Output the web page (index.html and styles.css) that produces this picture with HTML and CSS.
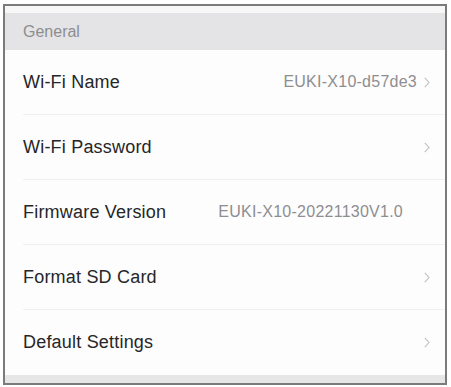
FILE: index.html
```html
<!DOCTYPE html>
<html>
<head>
<meta charset="utf-8">
<link rel="stylesheet" href="styles.css">
</head>
<body>
<div class="frame">
  <div class="top-strip"></div>
  <div class="section-header">General</div>
  <ul class="list">
    <li class="row">
      <div class="row-inner">
        <span class="label">Wi-Fi Name</span>
        <span class="value">EUKI-X10-d57de3</span>
        <svg class="chev" width="6" height="11" viewBox="0 0 6 11"><polyline points="0.8,0.8 5,5.5 0.8,10.2" fill="none" stroke="#bfbfc4" stroke-width="1.1"/></svg>
      </div>
    </li>
    <li class="row">
      <div class="row-inner">
        <span class="label">Wi-Fi Password</span>
        <svg class="chev" width="6" height="11" viewBox="0 0 6 11"><polyline points="0.8,0.8 5,5.5 0.8,10.2" fill="none" stroke="#bfbfc4" stroke-width="1.1"/></svg>
      </div>
    </li>
    <li class="row">
      <div class="row-inner">
        <span class="label">Firmware Version</span>
        <span class="value value-plain">EUKI-X10-20221130V1.0</span>
      </div>
    </li>
    <li class="row">
      <div class="row-inner">
        <span class="label">Format SD Card</span>
        <svg class="chev" width="6" height="11" viewBox="0 0 6 11"><polyline points="0.8,0.8 5,5.5 0.8,10.2" fill="none" stroke="#bfbfc4" stroke-width="1.1"/></svg>
      </div>
    </li>
    <li class="row">
      <div class="row-inner last">
        <span class="label">Default Settings</span>
        <svg class="chev" width="6" height="11" viewBox="0 0 6 11"><polyline points="0.8,0.8 5,5.5 0.8,10.2" fill="none" stroke="#bfbfc4" stroke-width="1.1"/></svg>
      </div>
    </li>
  </ul>
  <div class="bottom-strip"></div>
</div>
</body>
</html>
```

FILE: styles.css
```css
html, body {
  margin: 0;
  padding: 0;
  background: #ffffff;
}
body {
  font-family: "Liberation Sans", Arial, sans-serif;
  padding: 4px 0 0 3px;
}
.frame {
  width: 440px;
  border: 2px solid #7b7b7b;
  background: #fdfdfd;
  display: flex;
  flex-direction: column;
}
.top-strip {
  height: 7px;
  background: #f7f7f7;
}
.section-header {
  height: 37px;
  background: #e4e4e6;
  color: #8d8d91;
  font-size: 16px;
  padding-left: 18px;
  display: flex;
  align-items: center;
}
.list {
  list-style: none;
  margin: 0;
  padding: 0;
}
.row {
  height: 65px;
  padding-left: 18px;
  display: flex;
}
.row-inner {
  flex: 1;
  display: flex;
  align-items: center;
  padding-right: 15px;
  border-bottom: 1px solid #efefef;
}
.row-inner.last {
  border-bottom: none;
}
.label {
  font-size: 18px;
  letter-spacing: 0.2px;
  color: #262628;
  flex: 1;
}
.value {
  font-size: 16px;
  letter-spacing: 0.25px;
  color: #8e8e92;
  margin-right: 7px;
}
.value-plain {
  margin-right: 27px;
}
.chev {
  display: block;
}
.bottom-strip {
  height: 8px;
  background: #e6e6e6;
}
```
